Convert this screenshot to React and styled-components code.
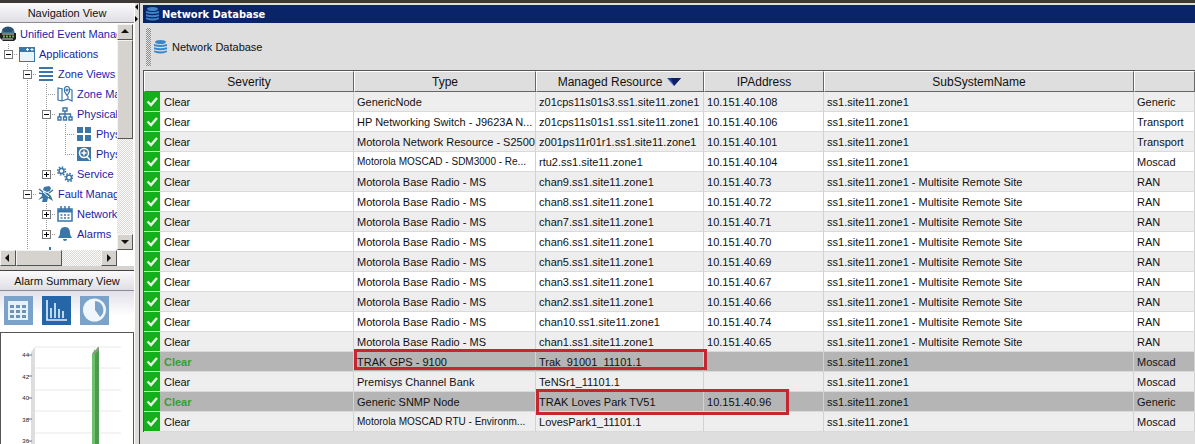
import React from 'react';
import styled, { createGlobalStyle, css } from 'styled-components';

const ACCENT = '#3b76a8';

const treeRows = [
  { label: 'Unified Event Manag', icon: 'root', guides: [] },
  { label: 'Applications', icon: 'window', guides: ['end'], box: 'minus' },
  { label: 'Zone Views', icon: 'list', guides: ['', 'tee'], box: 'minus' },
  { label: 'Zone Ma', icon: 'map', guides: ['', 'line', 'tee'] },
  { label: 'Physical', icon: 'sitemap', guides: ['', 'line', 'tee'], box: 'minus' },
  { label: 'Phys', icon: 'tiles', guides: ['', 'line', 'line', 'tee'] },
  { label: 'Phys', icon: 'search', guides: ['', 'line', 'line', 'end'] },
  { label: 'Service', icon: 'gears', guides: ['', 'line', 'end'], box: 'plus' },
  { label: 'Fault Manag', icon: 'fault', guides: ['', 'tee'], box: 'minus' },
  { label: 'Network', icon: 'calendar', guides: ['', 'line', 'tee'], box: 'plus' },
  { label: 'Alarms', icon: 'bell', guides: ['', 'line', 'end'], box: 'plus' },
  { label: '', icon: 'stats', guides: ['', 'tee'], box: 'minus' },
];

const ZONE = 'ss1.site11.zone1';
const REMOTE = 'ss1.site11.zone1 - Multisite Remote Site';
const BASE = 'Motorola Base Radio - MS';

const resources = [
  { type: 'GenericNode', name: 'z01cps11s01s3.ss1.site11.zone1', ip: '10.151.40.108', sub: ZONE, category: 'Generic' },
  { type: 'HP Networking Switch - J9623A N...', name: 'z01cps11s01s1.ss1.site11.zone1', ip: '10.151.40.106', sub: ZONE, category: 'Transport' },
  { type: 'Motorola Network Resource - S2500', name: 'z001ps11r01r1.ss1.site11.zone1', ip: '10.151.40.101', sub: ZONE, category: 'Transport' },
  { type: 'Motorola MOSCAD - SDM3000 - Re...', name: 'rtu2.ss1.site11.zone1', ip: '10.151.40.104', sub: ZONE, category: 'Moscad', compact: true },
  { type: BASE, name: 'chan9.ss1.site11.zone1', ip: '10.151.40.73', sub: REMOTE, category: 'RAN' },
  { type: BASE, name: 'chan8.ss1.site11.zone1', ip: '10.151.40.72', sub: REMOTE, category: 'RAN' },
  { type: BASE, name: 'chan7.ss1.site11.zone1', ip: '10.151.40.71', sub: REMOTE, category: 'RAN' },
  { type: BASE, name: 'chan6.ss1.site11.zone1', ip: '10.151.40.70', sub: REMOTE, category: 'RAN' },
  { type: BASE, name: 'chan5.ss1.site11.zone1', ip: '10.151.40.69', sub: REMOTE, category: 'RAN' },
  { type: BASE, name: 'chan3.ss1.site11.zone1', ip: '10.151.40.67', sub: REMOTE, category: 'RAN' },
  { type: BASE, name: 'chan2.ss1.site11.zone1', ip: '10.151.40.66', sub: REMOTE, category: 'RAN' },
  { type: BASE, name: 'chan10.ss1.site11.zone1', ip: '10.151.40.74', sub: REMOTE, category: 'RAN' },
  { type: BASE, name: 'chan1.ss1.site11.zone1', ip: '10.151.40.65', sub: REMOTE, category: 'RAN' },
  { type: 'TRAK GPS - 9100', name: 'Trak_91001_11101.1', ip: '', sub: ZONE, category: 'Moscad', selected: true, mark: 'type' },
  { type: 'Premisys Channel Bank', name: 'TeNSr1_11101.1', ip: '', sub: ZONE, category: 'Moscad' },
  { type: 'Generic SNMP Node', name: 'TRAK Loves Park TV51', ip: '10.151.40.96', sub: ZONE, category: 'Generic', selected: true, mark: 'name' },
  { type: 'Motorola MOSCAD RTU - Environm...', name: 'LovesPark1_11101.1', ip: '', sub: ZONE, category: 'Moscad', compact: true },
];

const TreeIcon = ({ name }) => {
  const shapes = {
    root: (
      <>
        <circle cx="8" cy="8" r="7" fill="#3f7593" />
        <path d="M2 4a7 7 0 0 1 12 0l-3 2H4z" fill="#2a506f" />
        <path d="M0 7h16v6l-2 2H3l-3-3z" fill="#20231f" />
        <path d="M2 8h12M2 13h11" stroke="#d8dfc9" />
        <path d="M3 10.500h11" stroke="#72ad5c" strokeWidth="2" strokeDasharray="2 1" />
      </>
    ),
    window: (
      <>
        <path d="M0 1h16v15H0z" fill={ACCENT} />
        <path d="M1 6h14v9H1z" fill="#e9f3f8" />
        <path d="M7 3.500h3M11.500 3.500h3M8.500 2v3M13 2v3" stroke="#fff" />
      </>
    ),
    list: <path d="M1 2h14M1 6h14M1 10h14M1 14h14" stroke={ACCENT} strokeWidth="2" />,
    map: (
      <g fill="none" stroke={ACCENT} strokeWidth="1.200">
        <path d="M6 3L1 2v12l4 1 6-2 4 2V4l-2-1M5 3v12M11 10v3" />
        <path d="M10 9.500L7.500 5.500V3A2.500 2.500 0 0 1 12.500 3v2.500z" />
        <circle cx="10" cy="4" r="1" />
      </g>
    ),
    sitemap: (
      <g fill="none" stroke={ACCENT} strokeWidth="1.400">
        <path d="M6 2h4v3H6zM1 11h3v3H1zM6.500 11h3v3h-3zM12 11h3v3h-3zM8 5v6M2.500 11V8h11v3" />
      </g>
    ),
    tiles: <path d="M1 1h6v6H1zM9 1h6v6H9zM1 9h6v6H1zM9 9h6v6H9z" fill={ACCENT} />,
    search: (
      <>
        <path d="M1 1h14v14H1z" fill={ACCENT} />
        <circle cx="8" cy="7" r="4.500" fill="none" stroke="#fff" strokeWidth="1.500" />
        <path d="M11 10.500l3 3.500M5.500 7h5M8 4.500v5" stroke="#fff" strokeWidth="1.500" />
      </>
    ),
    gears: (
      <g fill="none" stroke={ACCENT}>
        <circle cx="4.500" cy="5" r="2.500" strokeWidth="1.500" />
        <circle cx="4.500" cy="5" r="4" strokeDasharray="1.600 1.500" strokeWidth="1.500" />
        <circle cx="12" cy="11.500" r="2.500" strokeWidth="1.500" />
        <circle cx="12" cy="11.500" r="4" strokeDasharray="1.600 1.500" strokeWidth="1.500" />
      </g>
    ),
    fault: (
      <>
        <path d="M6 1l5-1 2 2-1 3-3 1-4-2zM4 6l6 1 3 3 2 5-5-3-1 4H4l1-4-5 2 4-4z" fill={ACCENT} />
        <path d="M1 3l4 3M1 7l4 1M11 7l4-3" stroke={ACCENT} strokeWidth="1.500" />
        <path d="M5 6l6 5" stroke="#fff" />
      </>
    ),
    calendar: (
      <>
        <path d="M1 3h14v12H1z" fill="#fff" stroke={ACCENT} strokeWidth="1.500" />
        <path d="M1 5h14" stroke={ACCENT} strokeWidth="3" />
        <path d="M4 0v4M8 0v4M12 0v4" stroke={ACCENT} strokeWidth="1.500" />
        <path d="M3.500 9h9M3.500 12h9" stroke={ACCENT} strokeWidth="1.500" strokeDasharray="2 1.500" />
      </>
    ),
    bell: (
      <path d="M8 1c4 0 5 3 5 6 0 2 1 3 2 5H1c1-2 2-3 2-5 0-3 1-6 5-6zM6 13h4a2 2 0 0 1-4 0z" fill={ACCENT} />
    ),
    stats: <path d="M2 4h2v12H2zM6 6h2v10H6zM11 1h2v15h-2z" fill={ACCENT} />,
  };
  return <svg width="16" height="16" viewBox="0 0 16 16">{shapes[name]}</svg>;
};

const DatabaseIcon = () => (
  <svg width="13" height="14" viewBox="0 0 13 14">
    <ellipse cx="6.500" cy="2" rx="5.500" ry="2" fill="#3d86c6" />
    <path d="M0 4q6.500 2 13 0v2q-6.500 2-13 0zM0 7.200q6.500 2 13 0v2q-6.500 2-13 0zM0 10.400q6.500 2 13 0v1.500q-6.500 3-13 0z" fill="#3d86c6" />
  </svg>
);

const Check = () => (
  <svg width="16" height="19" viewBox="0 0 16 19">
    <path d="M3.500 9.500l3.500 3.500 6-7" fill="none" stroke="#e6ffe0" strokeWidth="2.400" />
  </svg>
);

const Arrow = ({ dir }) => {
  const paths = { up: 'M0 5l4-4 4 4z', down: 'M0 2l4 4 4-4z', left: 'M5 0L1 4l4 4z', right: 'M2 0l4 4-4 4z' };
  return <svg width="8" height="8" viewBox="0 0 8 8"><path d={paths[dir]} fill="#111" /></svg>;
};

const AlarmChart = () => (
  <svg width="132" height="111" viewBox="0 0 132 111">
    <path d="M30 19l4-5v97h-4z" fill="#ddd" />
    <path d="M34 14h86M34 35h86M34 57h86M34 78h86M34 100h86" stroke="#e8e8e8" />
    <path d="M27 22h4M27 43h4M27 65h4M27 86h4M27 108h4" stroke="#777" />
    <path d="M91 21l3-5v95h-3z" fill="#6dc06c" />
    <path d="M94 18l4-4v97h-4z" fill="#4c9a4b" />
    <path d="M91 21l6-7h1v3l-4 4z" fill="#8d9a88" />
    <g fill="#222" fontSize="6" fontFamily="'Liberation Sans', Arial, sans-serif" textAnchor="end">
      <text x="28" y="24">44</text>
      <text x="28" y="46">42</text>
      <text x="28" y="67">40</text>
      <text x="28" y="89">38</text>
      <text x="28" y="110">36</text>
    </g>
  </svg>
);

const App = () => {
  return (
    <>
      <GlobalStyle />
      <Page>
        <Sidebar>
          <PanelTitle>Navigation View</PanelTitle>
          <TreePanel>
            <Tree>
              {treeRows.map((row, i) => (
                <TreeRow key={i}>
                  {row.guides.map((kind, g) => (
                    <Guide key={g} $kind={kind}>
                      {row.box && g === row.guides.length - 1 ? (
                        <Expander aria-label={row.box === 'plus' ? 'Expand' : 'Collapse'}>
                          <svg width="7" height="7" viewBox="0 0 7 7">
                            <path d={row.box === 'plus' ? 'M1 3h5v1H1zM3 1h1v5H3z' : 'M1 3h5v1H1z'} fill="#000" />
                          </svg>
                        </Expander>
                      ) : null}
                    </Guide>
                  ))}
                  <TreeIcon name={row.icon} />
                  <TreeLink href="#">{row.label}</TreeLink>
                </TreeRow>
              ))}
            </Tree>
            <VerticalBar>
              <ScrollButton aria-label="Scroll up"><Arrow dir="up" /></ScrollButton>
              <Thumb $height="99px" />
              <Track />
              <ScrollButton aria-label="Scroll down"><Arrow dir="down" /></ScrollButton>
            </VerticalBar>
          </TreePanel>
          <HorizontalBar>
            <ScrollButton aria-label="Scroll left"><Arrow dir="left" /></ScrollButton>
            <Thumb $width="46px" />
            <Track />
            <ScrollButton aria-label="Scroll right"><Arrow dir="right" /></ScrollButton>
          </HorizontalBar>
          <Divider />
          <PanelTitle>Alarm Summary View</PanelTitle>
          <ViewButtons>
            <ViewButton aria-label="Table">
              <svg width="29" height="29" viewBox="0 0 29 29">
                <path d="M4 5h20v19H4z" fill="#e6f2fb" />
                <path d="M6 10.500h16M6 15.500h16M6 20.500h16" stroke="#6d94b6" strokeWidth="3" strokeDasharray="4 2" />
              </svg>
            </ViewButton>
            <ViewButton $active aria-label="Bar chart">
              <svg width="29" height="29" viewBox="0 0 29 29">
                <path d="M5 4v20h20M9 22V12M13 22V7M17 22v-9M21 22v-7" fill="none" stroke="#e3f3fd" strokeWidth="1.600" />
              </svg>
            </ViewButton>
            <ViewButton aria-label="Pie chart">
              <svg width="29" height="29" viewBox="0 0 29 29">
                <circle cx="14.500" cy="14" r="11.500" fill="#eff7fc" />
                <path d="M15 14V5a9 9 0 0 1 5 16z" fill="#7ba3c9" />
              </svg>
            </ViewButton>
          </ViewButtons>
          <ChartBox><AlarmChart /></ChartBox>
        </Sidebar>
        <Splitter>
          <SplitButton aria-label="Collapse left">
            <svg width="3" height="6" viewBox="0 0 3 6"><path d="M3 0v6L0 3z" /></svg>
          </SplitButton>
          <SplitButton aria-label="Expand right">
            <svg width="3" height="6" viewBox="0 0 3 6"><path d="M0 0v6l3-3z" /></svg>
          </SplitButton>
        </Splitter>
        <Main>
          <TitleBar><DatabaseIcon />Network Database</TitleBar>
          <Toolbar>
            <Grip />
            <DatabaseIcon />
            <ToolbarText>Network Database</ToolbarText>
          </Toolbar>
          <Table>
            <colgroup>
              <Col $width="16px" />
              <Col $width="194px" />
              <Col $width="182px" />
              <Col $width="168px" />
              <Col $width="120px" />
              <Col />
              <Col $width="61px" />
            </colgroup>
            <thead>
              <tr>
                <Th colSpan={2}>Severity</Th>
                <Th>Type</Th>
                <Th>
                  Managed Resource
                  <SortIcon width="16" height="8" viewBox="0 0 16 8">
                    <path d="M1 0h14L8 8z" fill="#1b3aa0" />
                    <path d="M5 0h10l-7 8z" fill="#0d1f66" />
                    <path d="M1 0l7 8" stroke="#8fa5e0" />
                  </SortIcon>
                </Th>
                <Th>IPAddress</Th>
                <Th>SubSystemName</Th>
                <Th />
              </tr>
            </thead>
            <tbody>
              {resources.map((item) => (
                <Row key={item.name} $selected={item.selected}>
                  <CheckCell><Check /></CheckCell>
                  <SeverityCell $selected={item.selected}>Clear</SeverityCell>
                  <Cell $compact={item.compact}>
                    {item.type}
                    {item.mark === 'type' && <Mark $width="353px" $height="21px" />}
                  </Cell>
                  <Cell>
                    {item.name}
                    {item.mark === 'name' && <Mark $width="253px" $height="26px" />}
                  </Cell>
                  <Cell>{item.ip}</Cell>
                  <Cell>{item.sub}</Cell>
                  <Cell>{item.category}</Cell>
                </Row>
              ))}
            </tbody>
          </Table>
        </Main>
      </Page>
    </>
  );
};

export default App;

const GlobalStyle = createGlobalStyle`
  * {
    box-sizing: border-box;
  }
  body {
    margin: 0;
    background: #dedede;
    font-family: 'Liberation Sans', Arial, sans-serif;
    font-size: 11px;
    color: #111;
    overflow: hidden;
  }
  button {
    padding: 0;
    border: 0;
    background: none;
  }
  svg {
    display: block;
    flex: none;
  }
`;

const Page = styled.div`
  display: flex;
  min-height: 100vh;
  border-top: 3px solid #3c3835;
`;

const Sidebar = styled.aside`
  display: flex;
  flex-direction: column;
  width: 134px;
  flex: none;
  background: #fff;
`;

const PanelTitle = styled.h2`
  margin: 0;
  height: 20px;
  font-size: 11px;
  font-weight: normal;
  line-height: 21px;
  text-align: center;
  background: linear-gradient(#fbfbfc, #dfdee4);
  border-bottom: 1px solid #8c8a90;
`;

const TreePanel = styled.div`
  display: flex;
  height: 227px;
`;

const Tree = styled.div`
  flex: 1;
  overflow: hidden;
  padding-top: 1px;
`;

const TreeRow = styled.div`
  display: flex;
  align-items: center;
  height: 20px;
`;

const vertical = 'repeating-linear-gradient(#999 0 1px, transparent 1px 2px)';
const horizontal = 'repeating-linear-gradient(90deg, #999 0 1px, transparent 1px 2px)';

const Guide = styled.span`
  display: flex;
  align-items: center;
  width: 19px;
  height: 20px;
  padding-left: 4px;
  flex: none;
  background-repeat: no-repeat;
  ${({ $kind }) => $kind === 'line' && css`
    background-image: ${vertical};
    background-size: 1px 20px;
    background-position: 8px 0;
  `}
  ${({ $kind }) => ($kind === 'tee' || $kind === 'end') && css`
    background-image: ${vertical}, ${horizontal};
    background-size: 1px ${$kind === 'tee' ? 20 : 10}px, 10px 1px;
    background-position: 8px 0, 8px 10px;
  `}
`;

const Expander = styled.button`
  width: 9px;
  height: 9px;
  && {
    border: 1px solid #777;
    background: #fff;
  }
`;

const TreeLink = styled.a`
  padding-left: 4px;
  white-space: nowrap;
  color: #1c1ca8;
  text-decoration: none;
`;

const VerticalBar = styled.div`
  display: flex;
  flex-direction: column;
  width: 16px;
  margin-right: 1px;
  padding-top: 1px;
`;

const HorizontalBar = styled.div`
  display: flex;
  height: 16px;
  padding-right: 17px;
`;

const ScrollButton = styled.button`
  display: flex;
  align-items: center;
  justify-content: center;
  width: 16px;
  height: 16px;
  flex: none;
  && {
    background: #d6d3ce;
    border: 1px solid;
    border-color: #f4f4f4 #555 #555 #f4f4f4;
  }
`;

const Thumb = styled.div`
  width: ${({ $width }) => $width || '16px'};
  height: ${({ $height }) => $height || '16px'};
  flex: none;
  background: #d6d3ce;
  border: 1px solid;
  border-color: #f4f4f4 #555 #555 #f4f4f4;
`;

const Track = styled.div`
  flex: 1;
  background: repeating-conic-gradient(#dcdad6 0 25%, #fafafa 0 50%) 0 0 / 2px 2px;
`;

const Divider = styled.div`
  height: 5px;
  background: #d6d3ce;
  border-bottom: 1px solid #444;
`;

const ViewButtons = styled.div`
  display: flex;
  gap: 9px;
  height: 41px;
  padding: 5px 4px;
  background: linear-gradient(#e2e1e9, #fff 60%);
`;

const ViewButton = styled.button`
  width: 29px;
  height: 29px;
  && {
    background: ${({ $active }) => ($active ? '#2566a8' : '#7ba3c9')};
  }
`;

const ChartBox = styled.div`
  flex: 1;
  border: 1px solid #555;
  border-bottom: 0;
  overflow: hidden;
`;

const Splitter = styled.div`
  display: flex;
  flex-direction: column;
  gap: 6px;
  width: 5px;
  padding-top: 1px;
  flex: none;
  background: #dedbd8;
  border-left: 1px solid #fff;
`;

const SplitButton = styled.button`
  width: 3px;
  height: 6px;
`;

const Main = styled.main`
  flex: 1;
  min-width: 0;
  padding: 2px 0 0 3px;
  border-left: 1px solid #4a4240;
  background: #dedede;
`;

const TitleBar = styled.h1`
  display: flex;
  align-items: center;
  gap: 3px;
  height: 18px;
  margin: 0;
  padding-left: 3px;
  font: bold 11px 'DejaVu Sans Condensed', 'Open Sans', sans-serif;
  color: #fff;
  background: #0a246a;
`;

const Toolbar = styled.div`
  display: flex;
  align-items: center;
  height: 47px;
  padding-left: 3px;
`;

const Grip = styled.span`
  width: 5px;
  height: 38px;
  margin-right: 3px;
  background: repeating-conic-gradient(#888 0 25%, #e6e6e6 0 50%) 0 0 / 2px 2px;
`;

const ToolbarText = styled.span`
  padding-left: 5px;
`;

const Table = styled.table`
  width: 100%;
  table-layout: fixed;
  border-collapse: separate;
  border-spacing: 0;
  border-top: 1px solid #555;
  border-left: 1px solid #555;
`;

const Col = styled.col`
  width: ${({ $width }) => $width || 'auto'};
`;

const Th = styled.th`
  height: 21px;
  padding: 0;
  font-size: 12px;
  font-weight: normal;
  background: #dedede;
  border: 1px solid;
  border-color: #fff #666 #666 #fff;
`;

const SortIcon = styled.svg`
  display: inline-block;
  margin-left: 4px;
`;

const Cell = styled.td`
  position: relative;
  height: 20px;
  padding: 0 0 0 3px;
  font-size: ${({ $compact }) => ($compact ? '10px' : '11px')};
  white-space: nowrap;
  border-right: 1px solid #d2d2d2;
  border-bottom: 1px solid #dadada;
`;

const SeverityCell = styled(Cell)`
  padding-left: 4px;
  ${({ $selected }) => $selected && css`
    font-weight: bold;
    color: #35a035;
  `}
`;

const CheckCell = styled.td`
  height: 20px;
  padding: 0;
  background: #14b01c;
  border-bottom: 1px solid #d5efd5;
`;

const Row = styled.tr`
  background: #fff;
  &:nth-child(odd) {
    background: #eee;
  }
  ${({ $selected }) => $selected && css`
    && {
      background: #b5b5b5;
    }
  `}
`;

const Mark = styled.span`
  position: absolute;
  z-index: 1;
  top: -3px;
  left: 0;
  width: ${({ $width }) => $width};
  height: ${({ $height }) => $height};
  border: 3px solid #c4272f;
  pointer-events: none;
`;
